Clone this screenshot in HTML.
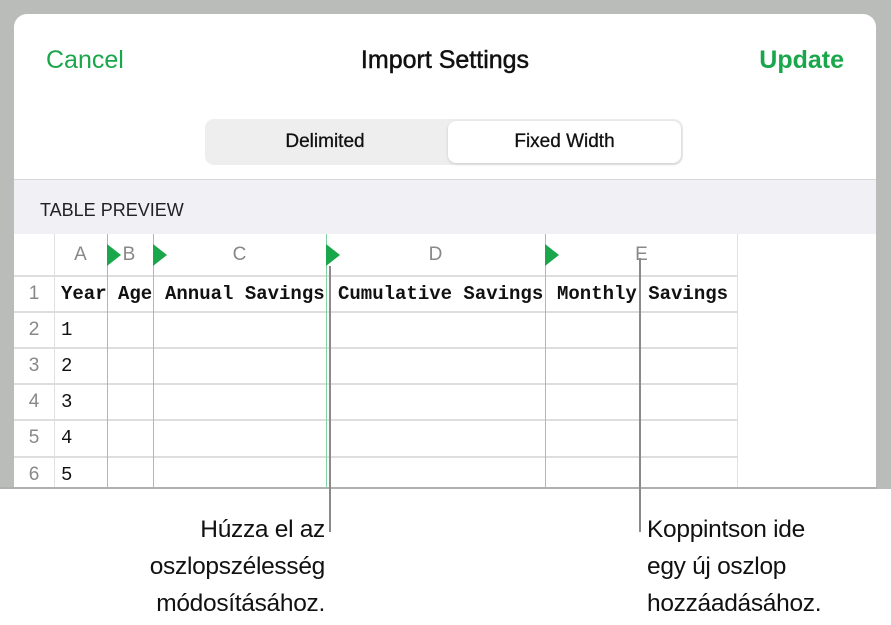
<!DOCTYPE html>
<html><head><meta charset="utf-8"><style>
*{margin:0;padding:0;box-sizing:border-box}
body{width:891px;height:625px;background:#fff;position:relative;overflow:hidden;font-family:"Liberation Sans",sans-serif}
.frame{position:absolute;left:0;top:0;width:891px;height:489px;background:#b9bcb9}
.card{position:absolute;left:14px;top:14px;width:862px;height:473px;background:#fff;border-radius:13px 13px 0 0;overflow:hidden}
.a{position:absolute;white-space:nowrap}
.g{color:#1aa64a}
.mono{font-family:"Liberation Mono",monospace;font-weight:bold;font-size:19px;color:#111}
.hl{position:absolute;height:2px;background:#dedede}
.vl{position:absolute;width:1px;background:#e0e0e0}
.gl{position:absolute;width:1px;background:#7fd4a2}
.tri{position:absolute;width:0;height:0;border-top:11px solid transparent;border-bottom:11px solid transparent;border-left:14px solid #1aa64a}
.rn{position:absolute;left:0;width:40px;text-align:center;font-size:19px;color:#888}
.cl{position:absolute;font-size:19px;color:#888;text-align:center}
.call{position:absolute;font-size:24.5px;line-height:37px;color:#111;letter-spacing:-0.3px}
</style></head><body>
<div class="frame"></div>
<div class="card">
 <div class="a g" style="left:32px;top:32px;font-size:25px">Cancel</div>
 <div class="a" style="left:0;width:862px;text-align:center;top:32px;font-size:25px;color:#111;-webkit-text-stroke:0.5px #111">Import Settings</div>
 <div class="a g" style="right:32px;top:32px;font-size:25px;font-weight:bold">Update</div>
 <div class="a" style="left:191px;top:105px;width:478px;height:46px;background:#eeeeef;border-radius:9px"></div>
 <div class="a" style="left:434px;top:107px;width:233px;height:42px;background:#fff;border-radius:8px;box-shadow:0 1px 3px rgba(0,0,0,.15)"></div>
 <div class="a" style="left:191px;width:240px;text-align:center;top:117px;font-size:19px;color:#111;-webkit-text-stroke:0.3px #111">Delimited</div>
 <div class="a" style="left:434px;width:233px;text-align:center;top:117px;font-size:19px;color:#111;-webkit-text-stroke:0.3px #111">Fixed Width</div>
 <div class="a" style="left:0;top:165px;width:862px;height:55px;background:#f0f0f5;border-top:1px solid #d8d8dc"></div>
 <div class="a" style="left:26px;top:186px;font-size:18px;color:#222">TABLE PREVIEW</div>
 <div class="a" style="left:0;top:220px;width:724px;height:253px;background:#fff;border-right:1px solid #e0e0e0"></div>
 <div class="vl" style="left:40px;top:220px;height:253px"></div>
 <div class="hl" style="left:0;top:261px;width:724px"></div>
 <div class="hl" style="left:0;top:297px;width:724px"></div>
 <div class="hl" style="left:0;top:333px;width:724px"></div>
 <div class="hl" style="left:0;top:369px;width:724px"></div>
 <div class="hl" style="left:0;top:405px;width:724px"></div>
 <div class="hl" style="left:0;top:442px;width:724px"></div>
 <div class="gl" style="left:93px;top:220px;height:253px"></div>
 <div class="gl" style="left:139px;top:220px;height:253px"></div>
 <div class="gl" style="left:312px;top:220px;height:253px"></div>
 <div class="gl" style="left:531px;top:220px;height:253px"></div>
 <div class="tri" style="left:93px;top:230px"></div>
 <div class="tri" style="left:139px;top:230px"></div>
 <div class="tri" style="left:312px;top:230px"></div>
 <div class="tri" style="left:531px;top:230px"></div>
 <div class="cl" style="left:40px;width:53px;top:230px">A</div>
 <div class="cl" style="left:100px;width:30px;top:230px">B</div>
 <div class="cl" style="left:139px;width:173px;top:230px">C</div>
 <div class="cl" style="left:312px;width:219px;top:230px">D</div>
 <div class="cl" style="left:531px;width:193px;top:230px">E</div>
 <div class="rn" style="top:269px">1</div>
 <div class="rn" style="top:305px">2</div>
 <div class="rn" style="top:341px">3</div>
 <div class="rn" style="top:377px">4</div>
 <div class="rn" style="top:413px">5</div>
 <div class="rn" style="top:450px">6</div>
 <div class="a mono" style="left:47px;top:269px">Year</div>
 <div class="a mono" style="left:104px;top:269px">Age</div>
 <div class="a mono" style="left:151px;top:269px">Annual Savings</div>
 <div class="a mono" style="left:324px;top:269px">Cumulative Savings</div>
 <div class="a mono" style="left:543px;top:269px">Monthly Savings</div>
 <div class="a mono" style="left:47px;top:305px;font-weight:normal">1</div>
 <div class="a mono" style="left:47px;top:341px;font-weight:normal">2</div>
 <div class="a mono" style="left:47px;top:377px;font-weight:normal">3</div>
 <div class="a mono" style="left:47px;top:413px;font-weight:normal">4</div>
 <div class="a mono" style="left:47px;top:450px;font-weight:normal">5</div>
</div>
<div class="a" style="left:0;top:487px;width:877px;height:2px;background:#b0b0b0"></div>
<div class="a" style="left:329px;top:266px;width:2px;height:266px;background:#8a8a8a"></div>
<div class="a" style="left:639px;top:258px;width:2px;height:274px;background:#8a8a8a"></div>
<div class="call" style="right:566px;top:511px;text-align:right">Húzza el az<br>oszlopszélesség<br>módosításához.</div>
<div class="call" style="left:647px;top:511px">Koppintson ide<br>egy új oszlop<br>hozzáadásához.</div>
</body></html>
